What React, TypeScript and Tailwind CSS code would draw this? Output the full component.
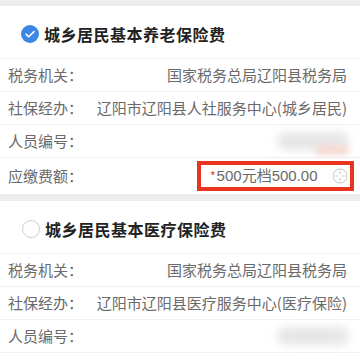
import React from "react"

const font = { fontFamily: '"Noto Sans CJK SC", "Noto Sans", sans-serif' }

function CheckIcon({ checked }: { checked: boolean }) {
  if (!checked) {
    return <div className="w-[18px] h-[18px] rounded-full border border-[#cfcfcf] bg-white" />
  }
  return (
    <svg width="18" height="18" viewBox="0 0 18 18">
      <circle cx="9" cy="9" r="9" fill="#3b87e4" />
      <path d="M5 9.2l2.7 2.6L13 6.6" fill="none" stroke="#fff" strokeWidth="1.6" strokeLinecap="round" strokeLinejoin="round" />
    </svg>
  )
}

function PickIcon() {
  return (
    <svg width="16" height="16" viewBox="0 0 16 16">
      <circle cx="8" cy="8" r="7" fill="none" stroke="#c4c4c4" strokeWidth="1" />
      <path d="M8 3.5v2M8 10.5v2M3.5 8h2M10.5 8h2" stroke="#c4c4c4" strokeWidth="1" strokeLinecap="round" />
    </svg>
  )
}

function Row({ label, children }: { label: string; children?: React.ReactNode }) {
  return (
    <div className="flex items-center justify-between pl-2 pr-[13px] h-[33px] border-b border-[#f1f1f1]">
      <span className="text-[15px] text-[#6a6a6a] whitespace-nowrap">{label}</span>
      {children}
    </div>
  )
}

function Blur({ pink }: { pink?: boolean }) {
  return (
    <div className="relative w-[72px] h-[18px] mr-[-2px]">
      <div className="absolute inset-0 rounded-full bg-[#e6e6e6] blur-[4px]" />
      {pink && <div className="absolute right-0 bottom-[-4px] w-[34px] h-[8px] rounded-full bg-[#f6d5cc] blur-[3px]" />}
    </div>
  )
}

export default function App() {
  return (
    <div className="w-[360px] h-[360px] bg-white overflow-hidden" style={font}>
      <div className="h-[6px] bg-[#ececec]" />

      <div className="flex items-center gap-[5px] pl-[21px] pt-[3px] h-[53px] border-b border-[#f1f1f1]">
        <CheckIcon checked />
        <span className="text-[16px] font-bold text-[#222] tracking-[0.5px]">城乡居民基本养老保险费</span>
      </div>
      <Row label="税务机关：">
        <span className="text-[15px] text-[#6a6a6a]">国家税务总局辽阳县税务局</span>
      </Row>
      <Row label="社保经办：">
        <span className="text-[15px] text-[#6a6a6a]">辽阳市辽阳县人社服务中心(城乡居民)</span>
      </Row>
      <Row label="人员编号：">
        <Blur pink />
      </Row>
      <div className="flex items-center justify-between pl-2 pr-[6px] h-[36px]">
        <span className="text-[15px] text-[#6a6a6a]">应缴费额：</span>
        <div className="flex items-center w-[157px] h-[30px] border-4 border-[#e9341f] pl-[9px] pr-[2px]">
          <span className="text-[#e9341f] text-[12px] mr-[1px] self-start mt-[2px]">*</span>
          <span className="text-[15px] text-[#6a6a6a]" style={{ fontFamily: '"Liberation Sans", "Noto Sans CJK SC", sans-serif' }}>
            500元档500.00
          </span>
          <div className="ml-auto">
            <PickIcon />
          </div>
        </div>
      </div>

      <div className="h-[7px] bg-[#ececec]" />

      <div className="flex items-center gap-[5px] pl-[22px] pt-[3px] h-[53px] border-b border-[#f1f1f1]">
        <CheckIcon checked={false} />
        <span className="text-[16px] font-bold text-[#222] tracking-[0.5px]">城乡居民基本医疗保险费</span>
      </div>
      <Row label="税务机关：">
        <span className="text-[15px] text-[#6a6a6a]">国家税务总局辽阳县税务局</span>
      </Row>
      <Row label="社保经办：">
        <span className="text-[15px] text-[#6a6a6a]">辽阳市辽阳县医疗服务中心(医疗保险)</span>
      </Row>
      <Row label="人员编号：">
        <Blur />
      </Row>
    </div>
  )
}
